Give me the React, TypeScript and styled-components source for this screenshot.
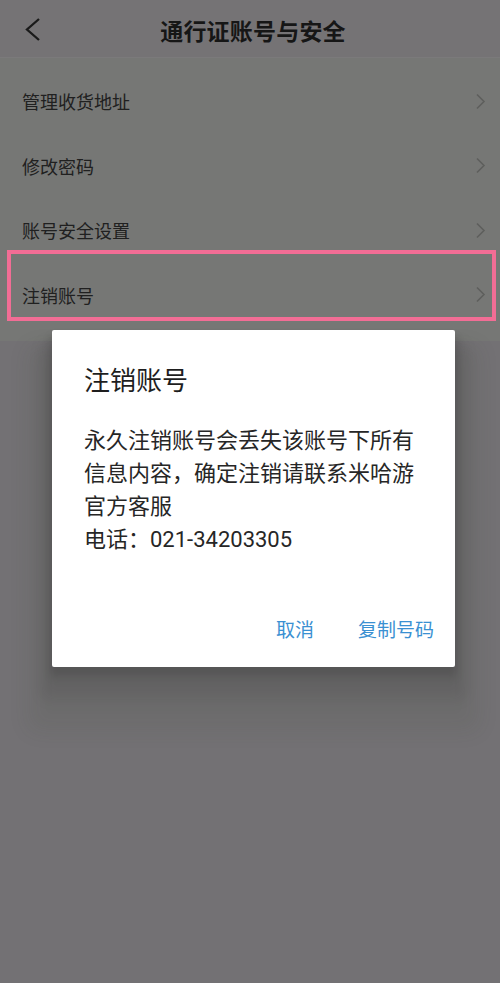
import React, { FC } from 'react';

import styled, { createGlobalStyle } from 'styled-components';

/**
 *
 * Styles
 */
const GlobalStyle = createGlobalStyle`
  html, body {
    margin: 0;
    padding: 0;
    background: #737174;
  }

  body {
    font-family: Roboto, 'Noto Sans CJK SC', sans-serif;
  }
`;

const Screen = styled.div`
  position: relative;
  width: 500px;
  height: 983px;
  overflow: hidden;
  background: #737174;
`;

const Header = styled.header`
  position: relative;
  display: flex;
  height: 57px;
  padding-left: 6px;

  justify-content: center;
  align-items: center;

  background: #757375;
  border-bottom: 1px solid #7b7a7b;
`;

const BackButton = styled.button`
  position: absolute;
  left: 18px;
  top: 14px;
  display: flex;
  width: 28px;
  height: 30px;
  padding: 0;

  justify-content: center;
  align-items: center;

  background: none;
  border: none;
`;

const HeaderTitle = styled.h1`
  margin: 0;
  padding-top: 3px;

  font-size: 23px;
  font-weight: 700;
  color: #161616;
  letter-spacing: 0.2px;
`;

const MenuList = styled.ul`
  margin: 0;
  padding: 11px 0 0;
  height: 272px;

  list-style: none;
  background: #767775;
`;

const MenuRow = styled.li`
  display: flex;
  height: 64.5px;
  padding: 0 14px 0 22px;

  justify-content: space-between;
  align-items: center;
`;

const MenuLabel = styled.span`
  font-size: 18px;
  color: #202020;
`;

const Highlight = styled.div`
  position: absolute;
  left: 7px;
  top: 250px;
  width: 481px;
  height: 63px;

  border: 4px solid #f26d95;
  pointer-events: none;
`;

const Dialog = styled.div`
  position: absolute;
  left: 52px;
  top: 330px;
  display: flex;
  width: 403px;
  height: 337px;
  box-sizing: border-box;
  padding: 34px 21px 15px 32px;

  flex-direction: column;

  background: #ffffff;
  border-radius: 2px;
  box-shadow:
    0 40px 20px 24px rgba(60, 70, 50, 0.1),
    0 22px 14px 10px rgba(20, 20, 20, 0.1),
    0 8px 8px 2px rgba(0, 0, 0, 0.14);
`;

const DialogTitle = styled.h2`
  margin: 0;

  font-size: 26px;
  font-weight: 400;
  line-height: 34px;
  color: #1e1e1e;
`;

const DialogBody = styled.p`
  margin: 26px 0 0;
  max-width: 334px;

  font-size: 22px;
  line-height: 33px;
  color: #262626;
`;

const DialogActions = styled.div`
  display: flex;
  margin-top: auto;
  height: 48px;
  gap: 44px;

  justify-content: flex-end;
  align-items: center;
`;

const DialogButton = styled.button`
  padding: 0;

  font-family: inherit;
  font-size: 19px;
  color: #3a90d2;

  background: none;
  border: none;
`;

/**
 *
 * Static items
 */
const menuItems = ['管理收货地址', '修改密码', '账号安全设置', '注销账号'];

const ChevronLeft: FC = () => (
  <svg width="17" height="25" viewBox="0 0 17 25">
    <path d="M15 2 L3 12.5 L15 23" fill="none" stroke="#1a1a1a" strokeWidth="2.3" />
  </svg>
);

const ChevronRight: FC = () => (
  <svg width="11" height="17" viewBox="0 0 11 17">
    <path d="M2 1.5 L9 8.5 L2 15.5" fill="none" stroke="#5e5f5d" strokeWidth="1.6" />
  </svg>
);

const App: FC = () => (
  <>
    <GlobalStyle />
    <Screen>
      <Header>
        <BackButton aria-label="返回">
          <ChevronLeft />
        </BackButton>
        <HeaderTitle>通行证账号与安全</HeaderTitle>
      </Header>

      <MenuList>
        {menuItems.map((item) => (
          <MenuRow key={item}>
            <MenuLabel>{item}</MenuLabel>
            <ChevronRight />
          </MenuRow>
        ))}
      </MenuList>

      <Highlight />

      <Dialog role="dialog">
        <DialogTitle>注销账号</DialogTitle>
        <DialogBody>
          永久注销账号会丢失该账号下所有信息内容，确定注销请联系米哈游官方客服
          <br />
          电话：021-34203305
        </DialogBody>
        <DialogActions>
          <DialogButton>取消</DialogButton>
          <DialogButton>复制号码</DialogButton>
        </DialogActions>
      </Dialog>
    </Screen>
  </>
);

export default App;
